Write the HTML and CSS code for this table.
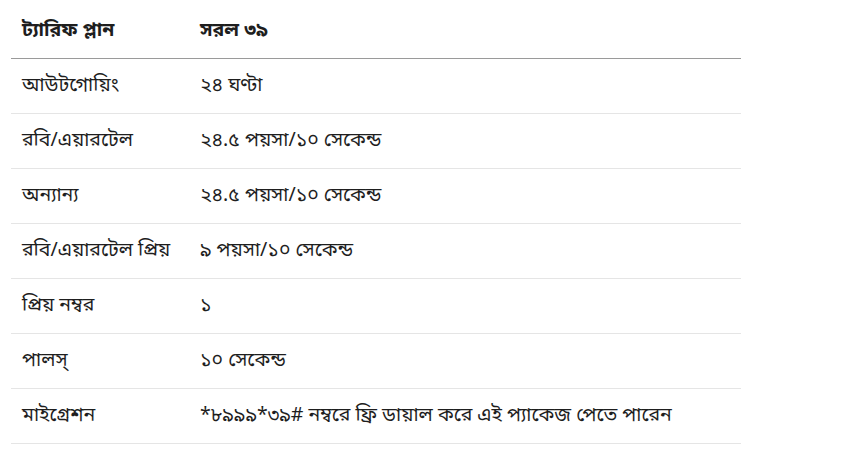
FILE: index.html
```html
<!DOCTYPE html>
<html lang="bn">
<head>
<meta charset="utf-8">
<title>ট্যারিফ প্লান</title>
<link rel="stylesheet" href="styles.css">
</head>
<body>
<table class="tariff">
  <thead>
    <tr><th class="c1">ট্যারিফ প্লান</th><th>সরল ৩৯</th></tr>
  </thead>
  <tbody>
    <tr><td class="c1">আউটগোয়িং</td><td>২৪ ঘণ্টা</td></tr>
    <tr><td class="c1">রবি/এয়ারটেল</td><td>২৪.৫ পয়সা/১০ সেকেন্ড</td></tr>
    <tr><td class="c1">অন্যান্য</td><td>২৪.৫ পয়সা/১০ সেকেন্ড</td></tr>
    <tr><td class="c1">রবি/এয়ারটেল প্রিয়</td><td>৯ পয়সা/১০ সেকেন্ড</td></tr>
    <tr><td class="c1">প্রিয় নম্বর</td><td>১</td></tr>
    <tr><td class="c1">পালস্</td><td>১০ সেকেন্ড</td></tr>
    <tr><td class="c1">মাইগ্রেশন</td><td>*৮৯৯৯*৩৯# নম্বরে ফ্রি ডায়াল করে এই প্যাকেজ পেতে পারেন</td></tr>
  </tbody>
</table>
</body>
</html>
```

FILE: styles.css
```css
html, body {
  margin: 0;
  padding: 0;
  background: #ffffff;
}
body {
  font-family: "Noto Sans Bengali", "Lohit Bengali", "Vrinda", "FreeSans", "Noto Sans", sans-serif;
  font-size: 19.5px;
  color: #1e1e1e;
}
.tariff {
  margin-left: 11px;
  width: 730px;
  border-collapse: collapse;
  table-layout: fixed;
}
.tariff th,
.tariff td {
  text-align: left;
  padding: 0 11px;
  vertical-align: middle;
  white-space: nowrap;
}
.tariff th {
  height: 54px;
  padding-top: 4px;
  font-weight: bold;
  border-bottom: 1px solid #9a9a9a;
}
.tariff td {
  height: 54px;
  font-weight: normal;
  border-bottom: 1px solid #e5e5e5;
}
.tariff .c1 {
  width: 156px;
}
```
